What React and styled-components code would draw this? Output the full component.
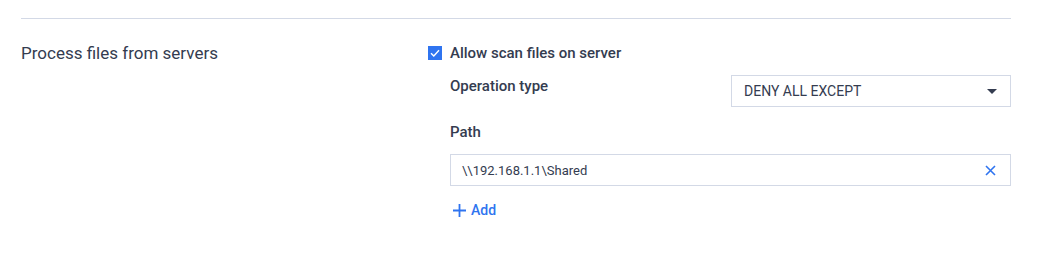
import React from 'react';
import styled, { createGlobalStyle } from 'styled-components';

const textColor = '#343c50';
const borderColor = '#d3d9e6';
const blue = '#2f74f0';

const GlobalStyle = createGlobalStyle`
  body {
    margin: 0;
    background: #fff;
    font-family: Roboto, "Noto Sans", sans-serif;
    color: ${textColor};
  }
`;

const Page = styled.div`
  padding: 18px 38px 0 21px;
`;

const Divider = styled.div`
  height: 1px;
  background: ${borderColor};
`;

const Section = styled.div`
  display: grid;
  grid-template-columns: 407px 1fr;
  padding-top: 24px;
`;

const SectionTitle = styled.div`
  font-size: 17px;
  line-height: 20px;
`;

const Content = styled.div`
  display: flex;
  flex-direction: column;
  padding-top: 1px;
`;

const CheckRow = styled.label`
  display: flex;
  align-items: center;
  gap: 8px;
  font-size: 15px;
  font-weight: 500;
  height: 18px;
`;

const Box = styled.span`
  width: 14px;
  height: 14px;
  background: ${blue};
  display: flex;
  align-items: center;
  justify-content: center;
`;

const Nested = styled.div`
  padding-left: 22px;
  display: flex;
  flex-direction: column;
`;

const FieldRow = styled.div`
  display: flex;
  justify-content: space-between;
  align-items: flex-start;
  margin-top: 13px;
`;

const FieldLabel = styled.div`
  font-size: 15px;
  font-weight: 500;
  line-height: 18px;
  margin-top: ${({ top }) => top || 0}px;
`;

const Select = styled.div`
  width: 280px;
  height: 32px;
  box-sizing: border-box;
  border: 1px solid ${borderColor};
  display: flex;
  align-items: center;
  justify-content: space-between;
  padding: 0 12px 0 12px;
  font-size: 14px;
  text-transform: uppercase;
`;

const Caret = styled.span`
  width: 0;
  height: 0;
  border-left: 5px solid transparent;
  border-right: 5px solid transparent;
  border-top: 5px solid ${textColor};
  margin-right: 1px;
`;

const Input = styled.div`
  height: 32px;
  box-sizing: border-box;
  border: 1px solid ${borderColor};
  display: flex;
  align-items: center;
  justify-content: space-between;
  padding: 0 14px 0 11px;
  font-size: 13px;
  margin-top: 13px;
`;

const AddButton = styled.button`
  display: flex;
  align-items: center;
  gap: 5px;
  background: none;
  border: 0;
  padding: 0 0 0 3px;
  margin-top: 16px;
  color: ${blue};
  font-family: inherit;
  font-size: 14px;
  font-weight: 500;
  cursor: pointer;
  align-self: flex-start;
`;

export default function App() {
  return (
    <Page>
      <GlobalStyle />
      <Divider />
      <Section>
        <SectionTitle>Process files from servers</SectionTitle>
        <Content>
          <CheckRow>
            <Box>
              <svg width="10" height="8" viewBox="0 0 10 8">
                <path d="M1 4.2 L3.8 7 L9 1.2" fill="none" stroke="#fff" strokeWidth="1.4" />
              </svg>
            </Box>
            Allow scan files on server
          </CheckRow>
          <Nested>
            <FieldRow>
              <FieldLabel top={2}>Operation type</FieldLabel>
              <Select>
                DENY ALL EXCEPT
                <Caret />
              </Select>
            </FieldRow>
            <FieldLabel top={16}>Path</FieldLabel>
            <Input>
              \\192.168.1.1\Shared
              <svg width="11" height="11" viewBox="0 0 11 11">
                <path d="M1 1 L10 10 M10 1 L1 10" stroke={blue} strokeWidth="1.6" />
              </svg>
            </Input>
            <AddButton>
              <svg width="13" height="13" viewBox="0 0 13 13">
                <path d="M6.5 0 V13 M0 6.5 H13" stroke={blue} strokeWidth="1.8" />
              </svg>
              Add
            </AddButton>
          </Nested>
        </Content>
      </Section>
    </Page>
  );
}
